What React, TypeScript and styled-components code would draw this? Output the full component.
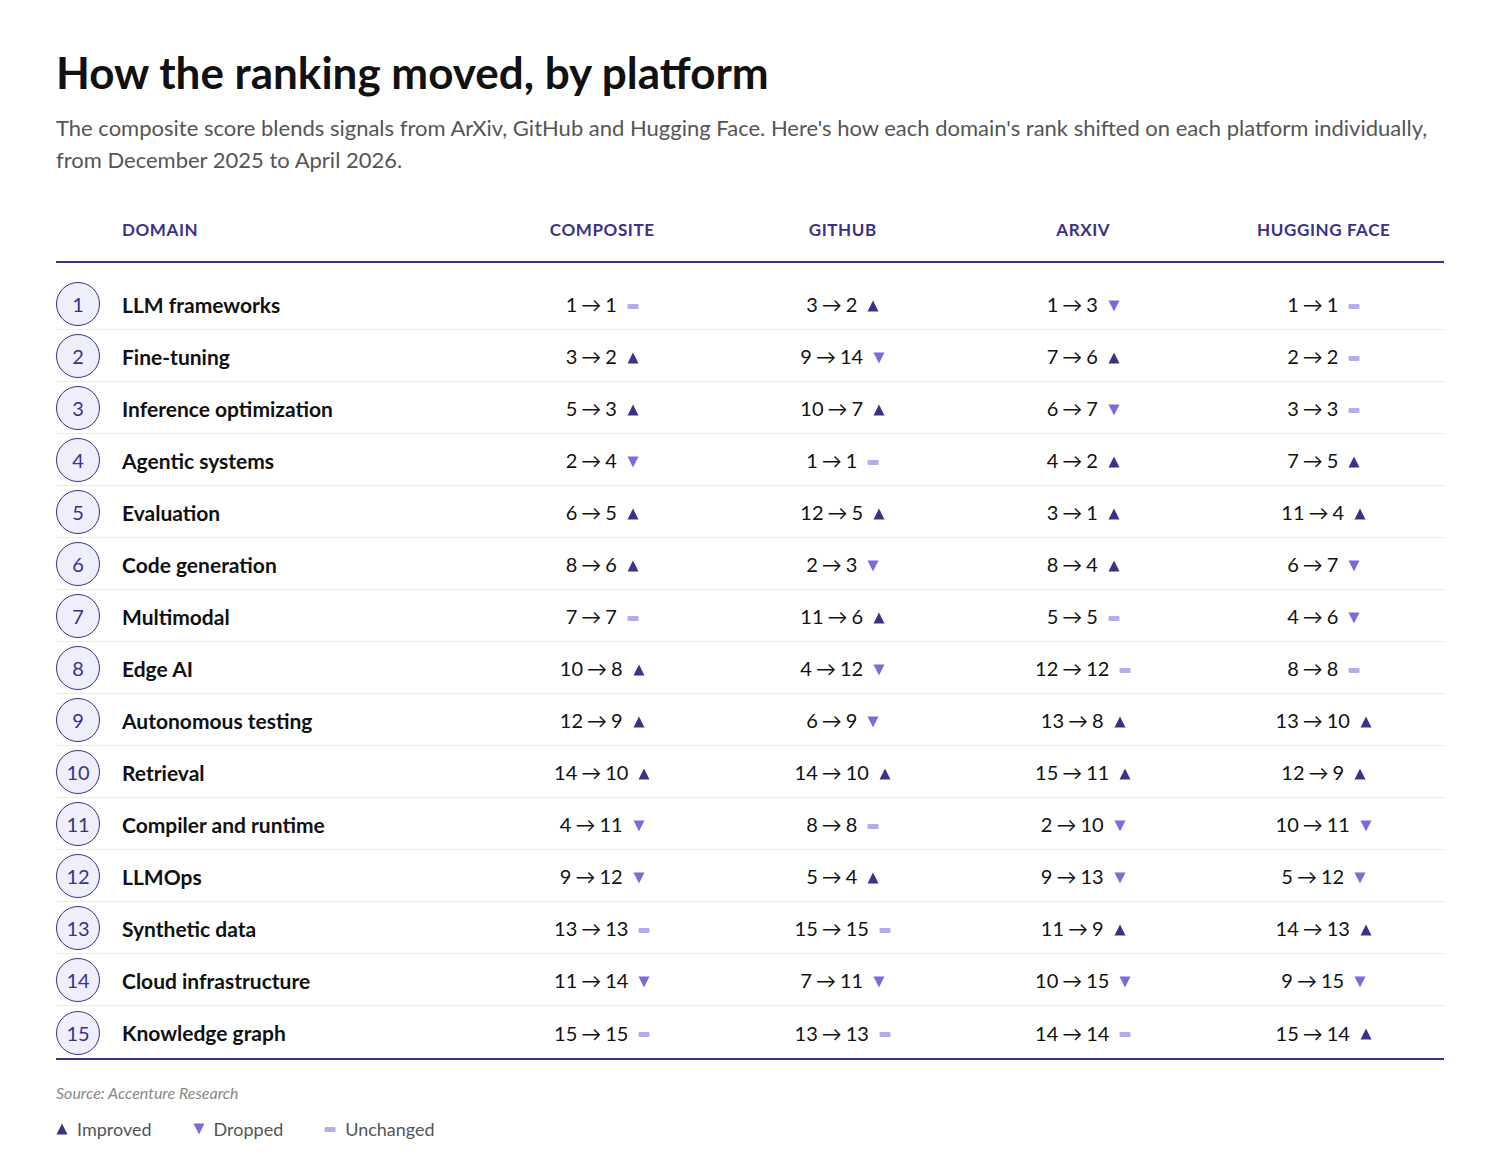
import React from "react"
import styled, { createGlobalStyle } from "styled-components"

const GlobalStyle = createGlobalStyle`
  html, body {
    margin: 0;
    padding: 0;
    background: #ffffff;
  }
  body {
    font-family: Lato, "Noto Sans", "DejaVu Sans", sans-serif;
    color: #111111;
  }
`

const INDIGO = "#3a3188"
const DROP = "#7a6cd8"
const SAME = "#b4acec"

type Pair = [number, number]

interface DomainRow {
  name: string
  composite: Pair
  github: Pair
  arxiv: Pair
  hf: Pair
}

const rows: DomainRow[] = [
  { name: "LLM frameworks", composite: [1, 1], github: [3, 2], arxiv: [1, 3], hf: [1, 1] },
  { name: "Fine-tuning", composite: [3, 2], github: [9, 14], arxiv: [7, 6], hf: [2, 2] },
  { name: "Inference optimization", composite: [5, 3], github: [10, 7], arxiv: [6, 7], hf: [3, 3] },
  { name: "Agentic systems", composite: [2, 4], github: [1, 1], arxiv: [4, 2], hf: [7, 5] },
  { name: "Evaluation", composite: [6, 5], github: [12, 5], arxiv: [3, 1], hf: [11, 4] },
  { name: "Code generation", composite: [8, 6], github: [2, 3], arxiv: [8, 4], hf: [6, 7] },
  { name: "Multimodal", composite: [7, 7], github: [11, 6], arxiv: [5, 5], hf: [4, 6] },
  { name: "Edge AI", composite: [10, 8], github: [4, 12], arxiv: [12, 12], hf: [8, 8] },
  { name: "Autonomous testing", composite: [12, 9], github: [6, 9], arxiv: [13, 8], hf: [13, 10] },
  { name: "Retrieval", composite: [14, 10], github: [14, 10], arxiv: [15, 11], hf: [12, 9] },
  { name: "Compiler and runtime", composite: [4, 11], github: [8, 8], arxiv: [2, 10], hf: [10, 11] },
  { name: "LLMOps", composite: [9, 12], github: [5, 4], arxiv: [9, 13], hf: [5, 12] },
  { name: "Synthetic data", composite: [13, 13], github: [15, 15], arxiv: [11, 9], hf: [14, 13] },
  { name: "Cloud infrastructure", composite: [11, 14], github: [7, 11], arxiv: [10, 15], hf: [9, 15] },
  { name: "Knowledge graph", composite: [15, 15], github: [13, 13], arxiv: [14, 14], hf: [15, 14] },
]

type Move = "up" | "down" | "same"

const moveOf = ([from, to]: Pair): Move => (to < from ? "up" : to > from ? "down" : "same")

const Page = styled.main`
  padding: 46px 56px 30px;
  width: 1388px;
`

const Title = styled.h1`
  margin: 0;
  font-size: 44px;
  line-height: 53px;
  font-weight: 700;
  color: #111111;
`

const Lede = styled.p`
  margin: 13px 0 0;
  font-size: 22px;
  line-height: 32px;
  color: #555555;
`

const Table = styled.div`
  margin-top: 22px;
`

const Grid = styled.div`
  display: grid;
  grid-template-columns: 426px repeat(4, 1fr);
  align-items: center;
`

const HeadRow = styled(Grid)`
  height: 63px;
  border-bottom: 2px solid ${INDIGO};
`

const HeadCell = styled.div<{ $left?: boolean }>`
  font-size: 17px;
  font-weight: 700;
  color: ${INDIGO};
  text-transform: uppercase;
  letter-spacing: 0.6px;
  text-align: ${({ $left }) => ($left ? "left" : "center")};
  padding-left: ${({ $left }) => ($left ? "66px" : "0")};
`

const Body = styled.div`
  padding-top: 15px;
  border-bottom: 2px solid ${INDIGO};
`

const Row = styled(Grid)`
  height: 52px;
  box-sizing: border-box;
  border-bottom: 1px solid #ebebeb;
  padding-top: 1px;

  &:last-child {
    border-bottom: none;
  }
`

const DomainCell = styled.div`
  display: flex;
  align-items: center;
  gap: 22px;
`

const Badge = styled.span`
  width: 44px;
  height: 44px;
  box-sizing: border-box;
  border-radius: 50%;
  border: 1.5px solid ${INDIGO};
  background: #efeefb;
  color: ${INDIGO};
  font-size: 20px;
  display: flex;
  align-items: center;
  justify-content: center;
  flex-shrink: 0;
`

const DomainName = styled.span`
  font-size: 21px;
  font-weight: 700;
  color: #111111;
`

const RankCell = styled.div`
  display: flex;
  align-items: center;
  justify-content: center;
  gap: 10px;
  font-size: 20px;
  color: #111111;
`

const Shift = styled.span`
  white-space: nowrap;
`

const Arrow = styled.span`
  margin: 0 4px;
`

const IconSlot = styled.span`
  display: inline-flex;
  padding-top: 3px;
`

const Source = styled.p`
  margin: 23px 0 0;
  font-size: 16px;
  font-style: italic;
  color: #888888;
`

const Legend = styled.div`
  display: flex;
  align-items: center;
  gap: 41px;
  margin-top: 16px;
`

const LegendItem = styled.span`
  display: flex;
  align-items: center;
  gap: 9px;
  font-size: 18px;
  color: #555555;
`

function MoveIcon({ move }: { move: Move }) {
  if (move === "same") {
    return (
      <svg width="12" height="12" viewBox="0 0 12 12" aria-hidden>
        <rect x="0.5" y="4" width="11" height="5" rx="1" fill={SAME} />
      </svg>
    )
  }
  if (move === "up") {
    return (
      <svg width="12" height="12" viewBox="0 0 12 12" aria-hidden>
        <path d="M6 0.5 L11.5 11.5 L0.5 11.5 Z" fill={INDIGO} />
      </svg>
    )
  }
  return (
    <svg width="12" height="12" viewBox="0 0 12 12" aria-hidden>
      <path d="M0.5 0.5 L11.5 0.5 L6 11.5 Z" fill={DROP} />
    </svg>
  )
}

function Rank({ pair }: { pair: Pair }) {
  return (
    <RankCell>
      <Shift>
        {pair[0]}
        <Arrow>→</Arrow>
        {pair[1]}
      </Shift>
      <IconSlot>
        <MoveIcon move={moveOf(pair)} />
      </IconSlot>
    </RankCell>
  )
}

export default function App() {
  return (
    <>
      <GlobalStyle />
      <Page>
        <Title>How the ranking moved, by platform</Title>
        <Lede>
          The composite score blends signals from ArXiv, GitHub and Hugging Face. Here's how each
          domain's rank shifted on each platform individually, from December 2025 to April 2026.
        </Lede>

        <Table>
          <HeadRow>
            <HeadCell $left>Domain</HeadCell>
            <HeadCell>Composite</HeadCell>
            <HeadCell>GitHub</HeadCell>
            <HeadCell>ArXiv</HeadCell>
            <HeadCell>Hugging Face</HeadCell>
          </HeadRow>
          <Body>
            {rows.map((r, i) => (
              <Row key={r.name}>
                <DomainCell>
                  <Badge>{i + 1}</Badge>
                  <DomainName>{r.name}</DomainName>
                </DomainCell>
                <Rank pair={r.composite} />
                <Rank pair={r.github} />
                <Rank pair={r.arxiv} />
                <Rank pair={r.hf} />
              </Row>
            ))}
          </Body>
        </Table>

        <Source>Source: Accenture Research</Source>
        <Legend>
          <LegendItem>
            <MoveIcon move="up" /> Improved
          </LegendItem>
          <LegendItem>
            <MoveIcon move="down" /> Dropped
          </LegendItem>
          <LegendItem>
            <MoveIcon move="same" /> Unchanged
          </LegendItem>
        </Legend>
      </Page>
    </>
  )
}
